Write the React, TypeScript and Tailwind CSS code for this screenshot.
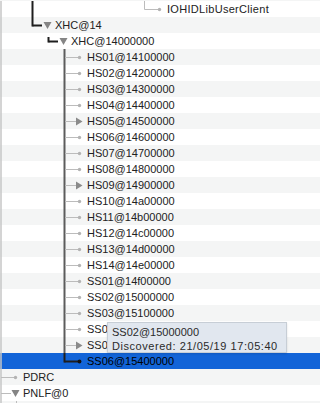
import React from "react";

type Mark = "dot" | "right" | "down" | "dotSel" | "none";
type Seg = [number, number, number, number, string, number];

type Row = {
  label: string;
  level: number;
  mark: Mark;
  segs: Seg[];
  selected?: boolean;
  wide?: boolean;
};

const MID = 8.5;
const ROOT = "#c6c6c6";
const BRANCH = "#bcbcbc";
const PATH = "#1e1e1e";
const TRUNK = "#5c5c5c";

const hs = [
  ["HS01@14100000", "dot"],
  ["HS02@14200000", "dot"],
  ["HS03@14300000", "dot"],
  ["HS04@14400000", "dot"],
  ["HS05@14500000", "right"],
  ["HS06@14600000", "dot"],
  ["HS07@14700000", "dot"],
  ["HS08@14800000", "dot"],
  ["HS09@14900000", "right"],
  ["HS10@14a00000", "dot"],
  ["HS11@14b00000", "dot"],
  ["HS12@14c00000", "dot"],
  ["HS13@14d00000", "dot"],
  ["HS14@14e00000", "dot"],
  ["SS01@14f00000", "dot"],
  ["SS02@15000000", "dot"],
  ["SS03@15100000", "dot"],
  ["SS04@15200000", "dot"],
  ["SS05@15300000", "right"],
] as const;

const rows: Row[] = [
  {
    label: "IOHIDLibUserClient",
    level: 9,
    mark: "dot",
    wide: true,
    segs: [
      [32.5, 0, 32.5, 16, PATH, 2],
      [144.5, 0, 144.5, MID, BRANCH, 1],
      [144.5, MID, 158, MID, BRANCH, 1],
    ],
  },
  {
    label: "XHC@14",
    level: 2,
    mark: "down",
    segs: [
      [32.5, 0, 32.5, MID + 1, PATH, 2],
      [32.5, MID, 42, MID, PATH, 2],
    ],
  },
  {
    label: "XHC@14000000",
    level: 3,
    mark: "down",
    segs: [
      [48.5, 4, 48.5, MID + 1, PATH, 2],
      [48.5, MID, 58, MID, PATH, 2],
    ],
  },
  ...hs.map(([label, mark]) => ({
    label,
    level: 4,
    mark: mark as Mark,
    segs: [
      [64.5, 0, 64.5, 16, TRUNK, 2],
      [65, MID, mark === "right" ? 76 : 79, MID, BRANCH, 1],
    ] as Seg[],
  })),
  {
    label: "SS06@15400000",
    level: 4,
    mark: "dotSel",
    selected: true,
    segs: [
      [64.5, 0, 64.5, MID + 1, PATH, 2],
      [64.5, MID, 79, MID, PATH, 2],
    ],
  },
  {
    label: "PDRC",
    level: 0,
    mark: "dot",
    segs: [[1, MID, 14, MID, BRANCH, 1]],
  },
  {
    label: "PNLF@0",
    level: 0,
    mark: "down",
    segs: [[1, MID, 11, MID, BRANCH, 1]],
  },
  {
    label: "",
    level: 0,
    mark: "none",
    segs: [[16.5, 0, 16.5, 16, BRANCH, 1]],
  },
];

function Gutter({ row }: { row: Row }) {
  const w = 16 * row.level + 23;
  const mx = 16 * row.level + 15.5;
  return (
    <svg width={w} height={16} className="shrink-0">
      <line x1={1} y1={0} x2={1} y2={16} stroke={ROOT} strokeWidth={1.5} />
      {row.segs.map(([x1, y1, x2, y2, c, sw], i) => (
        <line key={i} x1={x1} y1={y1} x2={x2} y2={y2} stroke={c} strokeWidth={sw} />
      ))}
      {row.mark === "dot" && <circle cx={mx} cy={MID} r={1.7} fill="#b3b3b3" />}
      {row.mark === "dotSel" && <circle cx={mx} cy={MID} r={1.9} fill="#111" />}
      {row.mark === "right" && (
        <polygon
          points={`${mx - 3.5},${MID - 4} ${mx - 3.5},${MID + 4} ${mx + 3},${MID}`}
          fill="#8a8a8a"
        />
      )}
      {row.mark === "down" && (
        <polygon
          points={`${mx - 4},${MID - 3.5} ${mx + 4},${MID - 3.5} ${mx},${MID + 3.5}`}
          fill="#858585"
        />
      )}
    </svg>
  );
}

export default function App() {
  return (
    <div
      className="relative w-[320px] h-[403px] overflow-hidden bg-white text-[11px] text-[#222]"
      style={{ fontFamily: '"Liberation Sans", Arial, sans-serif' }}
    >
      <div className="h-px bg-[#f4f5f5]" />
      {rows.map((row, i) => (
        <div
          key={i}
          className={
            row.selected
              ? "flex h-4 items-center bg-[#1264d8] text-black"
              : i % 2 === 1
              ? "flex h-4 items-center bg-[#f4f5f5]"
              : "flex h-4 items-center bg-white"
          }
        >
          <Gutter row={row} />
          <span className={row.wide ? "leading-4 tracking-[0.3px]" : "leading-4"}>{row.label}</span>
        </div>
      ))}

      <div className="absolute left-[107px] top-[322px] w-[180px] h-[31px] border border-[#c7ced6] bg-[#e1e7ef] px-[4px] pt-[2px] text-[11px] leading-[14px] text-[#2a2a2a] shadow-[0_1px_2px_rgba(0,0,0,0.12)]">
        <div>SS02@15000000</div>
        <div className="tracking-[0.55px]">Discovered: 21/05/19 17:05:40</div>
      </div>
    </div>
  );
}
